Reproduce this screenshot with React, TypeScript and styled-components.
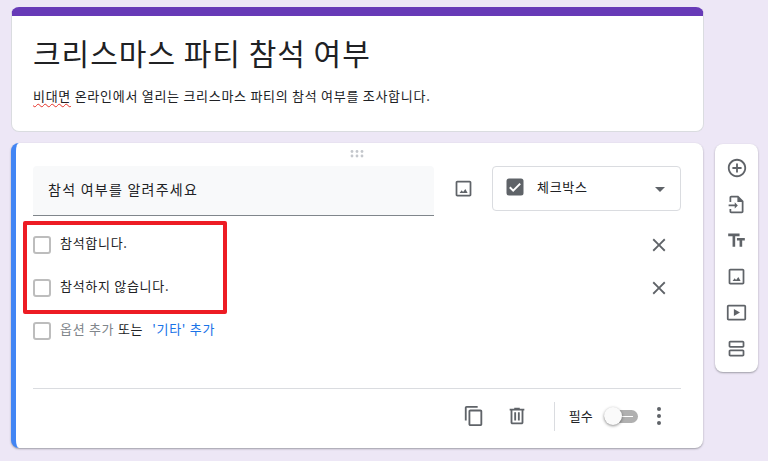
import styled, { createGlobalStyle } from "styled-components"

const GlobalStyle = createGlobalStyle`
  html, body {
    margin: 0;
    padding: 0;
    background: #ede7f6;
    width: 768px;
    height: 461px;
    overflow: hidden;
    font-family: "Noto Sans CJK KR", "Noto Sans", sans-serif;
  }
`

const Page = styled.div`
  box-sizing: border-box;
  width: 768px;
  height: 461px;
  padding: 7px 10px 0 11px;
  display: flex;
  flex-direction: column;
  gap: 11px;
`

const TitleCard = styled.div`
  box-sizing: border-box;
  width: 693px;
  height: 125px;
  background: #fff;
  border-radius: 8px;
  border: 1px solid #dadce0;
  border-top: 9px solid #673ab7;
  padding: 16px 21px 0;
`

const Title = styled.div`
  font-size: 30px;
  line-height: 40px;
  letter-spacing: 1px;
  color: #202124;
  height: 40px;
`

const Description = styled.div`
  margin-top: 14px;
  font-size: 13px;
  line-height: 20px;
  letter-spacing: 0.72px;
  color: #202124;
`

const Misspelled = styled.span`
  text-decoration: underline wavy #e5332a 1px;
  text-underline-offset: 2px;
`

const EditorRow = styled.div`
  display: flex;
  align-items: flex-start;
  gap: 12px;
`

const QuestionCard = styled.div`
  position: relative;
  box-sizing: border-box;
  width: 692px;
  height: 305px;
  background: #fff;
  border-radius: 8px;
  border-left: 5px solid #4285f4;
  box-shadow: 0 1px 2px rgba(60, 64, 67, 0.45);
  padding: 0 22px 0 17px;
  display: flex;
  flex-direction: column;
`

const DragHandle = styled.div`
  height: 23px;
  display: flex;
  justify-content: center;
  padding-top: 7px;
  box-sizing: border-box;
`

const QuestionHeader = styled.div`
  display: flex;
  align-items: flex-start;
  height: 50px;
`

const QuestionInput = styled.div`
  box-sizing: border-box;
  width: 401px;
  height: 50px;
  background: #f8f9fa;
  border-bottom: 1px solid #80868b;
  border-radius: 4px 4px 0 0;
  padding: 13px 15px 0;
  font-size: 14px;
  line-height: 20px;
  letter-spacing: 1.25px;
  color: #202124;
`

const ImageButton = styled.div`
  width: 58px;
  height: 44px;
  display: flex;
  align-items: center;
  justify-content: center;
`

const TypeSelect = styled.div`
  box-sizing: border-box;
  width: 189px;
  height: 45px;
  border: 1px solid #dadce0;
  border-radius: 4px;
  display: flex;
  align-items: center;
  padding: 0 15px 4px 13px;
  font-size: 13px;
  letter-spacing: 0.7px;
  color: #202124;
`

const TypeLabel = styled.span`
  margin-left: 13px;
  flex: 1;
`

const Caret = styled.span`
  width: 0;
  height: 0;
  border-left: 5px solid transparent;
  border-right: 5px solid transparent;
  border-top: 5px solid #5f6368;
  margin-top: 5px;
`

const Options = styled.div`
  margin-top: 7px;
  display: flex;
  flex-direction: column;
`

const OptionRow = styled.div`
  display: flex;
  align-items: center;
  height: 43px;
`

const Checkbox = styled.span`
  box-sizing: border-box;
  width: 18px;
  height: 18px;
  border: 2px solid #bdbdbd;
  border-radius: 3px;
  flex: none;
`

const OptionText = styled.span<{ $muted?: boolean }>`
  margin-left: 9px;
  padding-bottom: 4px;
  flex: 1;
  font-size: 13px;
  line-height: 18px;
  letter-spacing: 0.7px;
  color: ${(p) => (p.$muted ? "#80868b" : "#202124")};
`

const AddOther = styled.span`
  color: #1a73e8;
  margin-left: 9px;
`

const OrWord = styled.span`
  color: #202124;
`

const RemoveButton = styled.div`
  width: 24px;
  height: 24px;
  margin-right: 10px;
  display: flex;
  align-items: center;
  justify-content: center;
`

const Footer = styled.div`
  box-sizing: border-box;
  margin-top: auto;
  height: 60px;
  padding-bottom: 5px;
  border-top: 1px solid #dadce0;
  display: flex;
  align-items: center;
  justify-content: flex-end;
`

const FooterIcon = styled.div`
  width: 24px;
  height: 24px;
  margin-right: 19px;
  display: flex;
  align-items: center;
  justify-content: center;
`

const Divider = styled.div`
  width: 1px;
  height: 29px;
  background: #dadce0;
  margin: 0 14px 0 6px;
`

const RequiredLabel = styled.span`
  font-size: 13px;
  letter-spacing: 0.2px;
  color: #202124;
  margin-right: 11px;
  padding-bottom: 2px;
`

const Toggle = styled.div`
  position: relative;
  width: 34px;
  height: 13px;
  border-radius: 7px;
  background: #b0b0b0;
  margin-right: 19px;
  &::after {
    content: "";
    position: absolute;
    left: 16px;
    top: 6px;
    width: 13px;
    height: 1px;
    background: #fff;
  }
`

const ToggleKnob = styled.span`
  position: absolute;
  left: 0;
  top: -3px;
  width: 18px;
  height: 18px;
  border-radius: 50%;
  background: #fafafa;
  box-shadow: 0 1px 3px rgba(0, 0, 0, 0.45);
  z-index: 1;
`

const MoreDots = styled.div`
  display: flex;
  flex-direction: column;
  gap: 3px;
  margin-right: 20px;
  span {
    width: 4px;
    height: 4px;
    border-radius: 50%;
    background: #5f6368;
  }
`

const Highlight = styled.div`
  position: absolute;
  left: 7px;
  top: 78px;
  width: 204px;
  height: 93px;
  box-sizing: border-box;
  border: 4px solid #ed1c24;
  border-radius: 2px;
  pointer-events: none;
`

const SideBar = styled.div`
  box-sizing: border-box;
  width: 43px;
  height: 228px;
  margin-top: 1px;
  background: #fff;
  border-radius: 8px;
  box-shadow: 0 1px 2px rgba(60, 64, 67, 0.45);
  padding: 6px 0;
  display: flex;
  flex-direction: column;
  align-items: center;
`

const SideButton = styled.div`
  height: 36px;
  width: 100%;
  display: flex;
  align-items: center;
  justify-content: center;
`

const Icon = ({ size = 21, children }: { size?: number; children: React.ReactNode }) => (
  <svg width={size} height={size} viewBox="0 0 24 24" fill="#5f6368">{children}</svg>
)

const ImageIcon = () => (
  <Icon>
    <path d="M19 5v14H5V5h14m0-2H5c-1.1 0-2 .9-2 2v14c0 1.1.9 2 2 2h14c1.1 0 2-.9 2-2V5c0-1.1-.9-2-2-2z" />
    <path d="M14.1 12.6l-2.6 3.3-1.6-2-2.4 3.1h9.2z" />
  </Icon>
)

const CloseIcon = () => (
  <Icon size={22}>
    <path d="M19 6.41L17.59 5 12 10.59 6.41 5 5 6.41 10.59 12 5 17.59 6.41 19 12 13.41 17.59 19 19 17.59 13.41 12z" />
  </Icon>
)

const App = () => {
  return (
    <>
      <GlobalStyle />
      <Page>
        <TitleCard>
          <Title>크리스마스 파티 참석 여부</Title>
          <Description>
            <Misspelled>비대면</Misspelled> 온라인에서 열리는 크리스마스 파티의 참석 여부를 조사합니다.
          </Description>
        </TitleCard>
        <EditorRow>
          <QuestionCard>
            <DragHandle>
              <svg width="14" height="8" viewBox="0 0 14 8" fill="#c4c7cc">
                <circle cx="2" cy="1.5" r="1.4" />
                <circle cx="7" cy="1.5" r="1.4" />
                <circle cx="12" cy="1.5" r="1.4" />
                <circle cx="2" cy="6" r="1.4" />
                <circle cx="7" cy="6" r="1.4" />
                <circle cx="12" cy="6" r="1.4" />
              </svg>
            </DragHandle>
            <QuestionHeader>
              <QuestionInput>참석 여부를 알려주세요</QuestionInput>
              <ImageButton><ImageIcon /></ImageButton>
              <TypeSelect>
                <svg width="18" height="18" viewBox="0 0 18 18">
                  <rect x="0.5" y="0.5" width="17" height="17" rx="2.5" fill="#5f6368" />
                  <path d="M3.8 9.2l3.4 3.4 7-7" fill="none" stroke="#fff" strokeWidth="2" />
                </svg>
                <TypeLabel>체크박스</TypeLabel>
                <Caret />
              </TypeSelect>
            </QuestionHeader>
            <Options>
              <OptionRow>
                <Checkbox />
                <OptionText>참석합니다.</OptionText>
                <RemoveButton><CloseIcon /></RemoveButton>
              </OptionRow>
              <OptionRow>
                <Checkbox />
                <OptionText>참석하지 않습니다.</OptionText>
                <RemoveButton><CloseIcon /></RemoveButton>
              </OptionRow>
              <OptionRow>
                <Checkbox />
                <OptionText $muted>
                  옵션 추가 <OrWord>또는</OrWord><AddOther>'기타' 추가</AddOther>
                </OptionText>
              </OptionRow>
            </Options>
            <Footer>
              <FooterIcon>
                <Icon size={22}><path d="M16 1H4c-1.1 0-2 .9-2 2v14h2V3h12V1zm3 4H8c-1.1 0-2 .9-2 2v14c0 1.1.9 2 2 2h11c1.1 0 2-.9 2-2V7c0-1.1-.9-2-2-2zm0 16H8V7h11v14z" /></Icon>
              </FooterIcon>
              <FooterIcon>
                <Icon size={22}><path d="M15 4V3H9v1H4v2h1v13c0 1.1.9 2 2 2h10c1.1 0 2-.9 2-2V6h1V4h-5zm2 15H7V6h10v13zM9 8h2v9H9zm4 0h2v9h-2z" /></Icon>
              </FooterIcon>
              <Divider />
              <RequiredLabel>필수</RequiredLabel>
              <Toggle><ToggleKnob /></Toggle>
              <MoreDots><span /><span /><span /></MoreDots>
            </Footer>
            <Highlight />
          </QuestionCard>
          <SideBar>
            <SideButton>
              <Icon size={22}><path d="M13 7h-2v4H7v2h4v4h2v-4h4v-2h-4V7zm-1-5C6.48 2 2 6.48 2 12s4.48 10 10 10 10-4.48 10-10S17.52 2 12 2zm0 18c-4.41 0-8-3.59-8-8s3.59-8 8-8 8 3.59 8 8-3.59 8-8 8z" /></Icon>
            </SideButton>
            <SideButton>
              <Icon><path d="M14 2H6c-1.1 0-2 .9-2 2v5h2V4h7v5h5v11H6v-3H4v3c0 1.1.9 2 2 2h12c1.1 0 2-.9 2-2V8l-6-6zM10 12H3v2h7v2.5l3.5-3.5L10 9.5z" /></Icon>
            </SideButton>
            <SideButton>
              <Icon><path d="M2.5 4v3h5v12h3V7h5V4h-13zm19 5h-9v3h3v7h3v-7h3V9z" /></Icon>
            </SideButton>
            <SideButton><ImageIcon /></SideButton>
            <SideButton>
              <Icon>
                <path d="M21 3H3c-1.1 0-2 .9-2 2v14c0 1.1.9 2 2 2h18c1.1 0 2-.9 2-2V5c0-1.1-.9-2-2-2zm0 16H3V5h18v14z" />
                <path d="M9 8v8l7-4z" />
              </Icon>
            </SideButton>
            <SideButton>
              <Icon>
                <path d="M19 13H5c-1.1 0-2 .9-2 2v4c0 1.1.9 2 2 2h14c1.1 0 2-.9 2-2v-4c0-1.1-.9-2-2-2zm0 6H5v-4h14v4zM19 3H5c-1.1 0-2 .9-2 2v4c0 1.1.9 2 2 2h14c1.1 0 2-.9 2-2V5c0-1.1-.9-2-2-2zm0 6H5V5h14v4z" />
              </Icon>
            </SideButton>
          </SideBar>
        </EditorRow>
      </Page>
    </>
  )
}

export default App
